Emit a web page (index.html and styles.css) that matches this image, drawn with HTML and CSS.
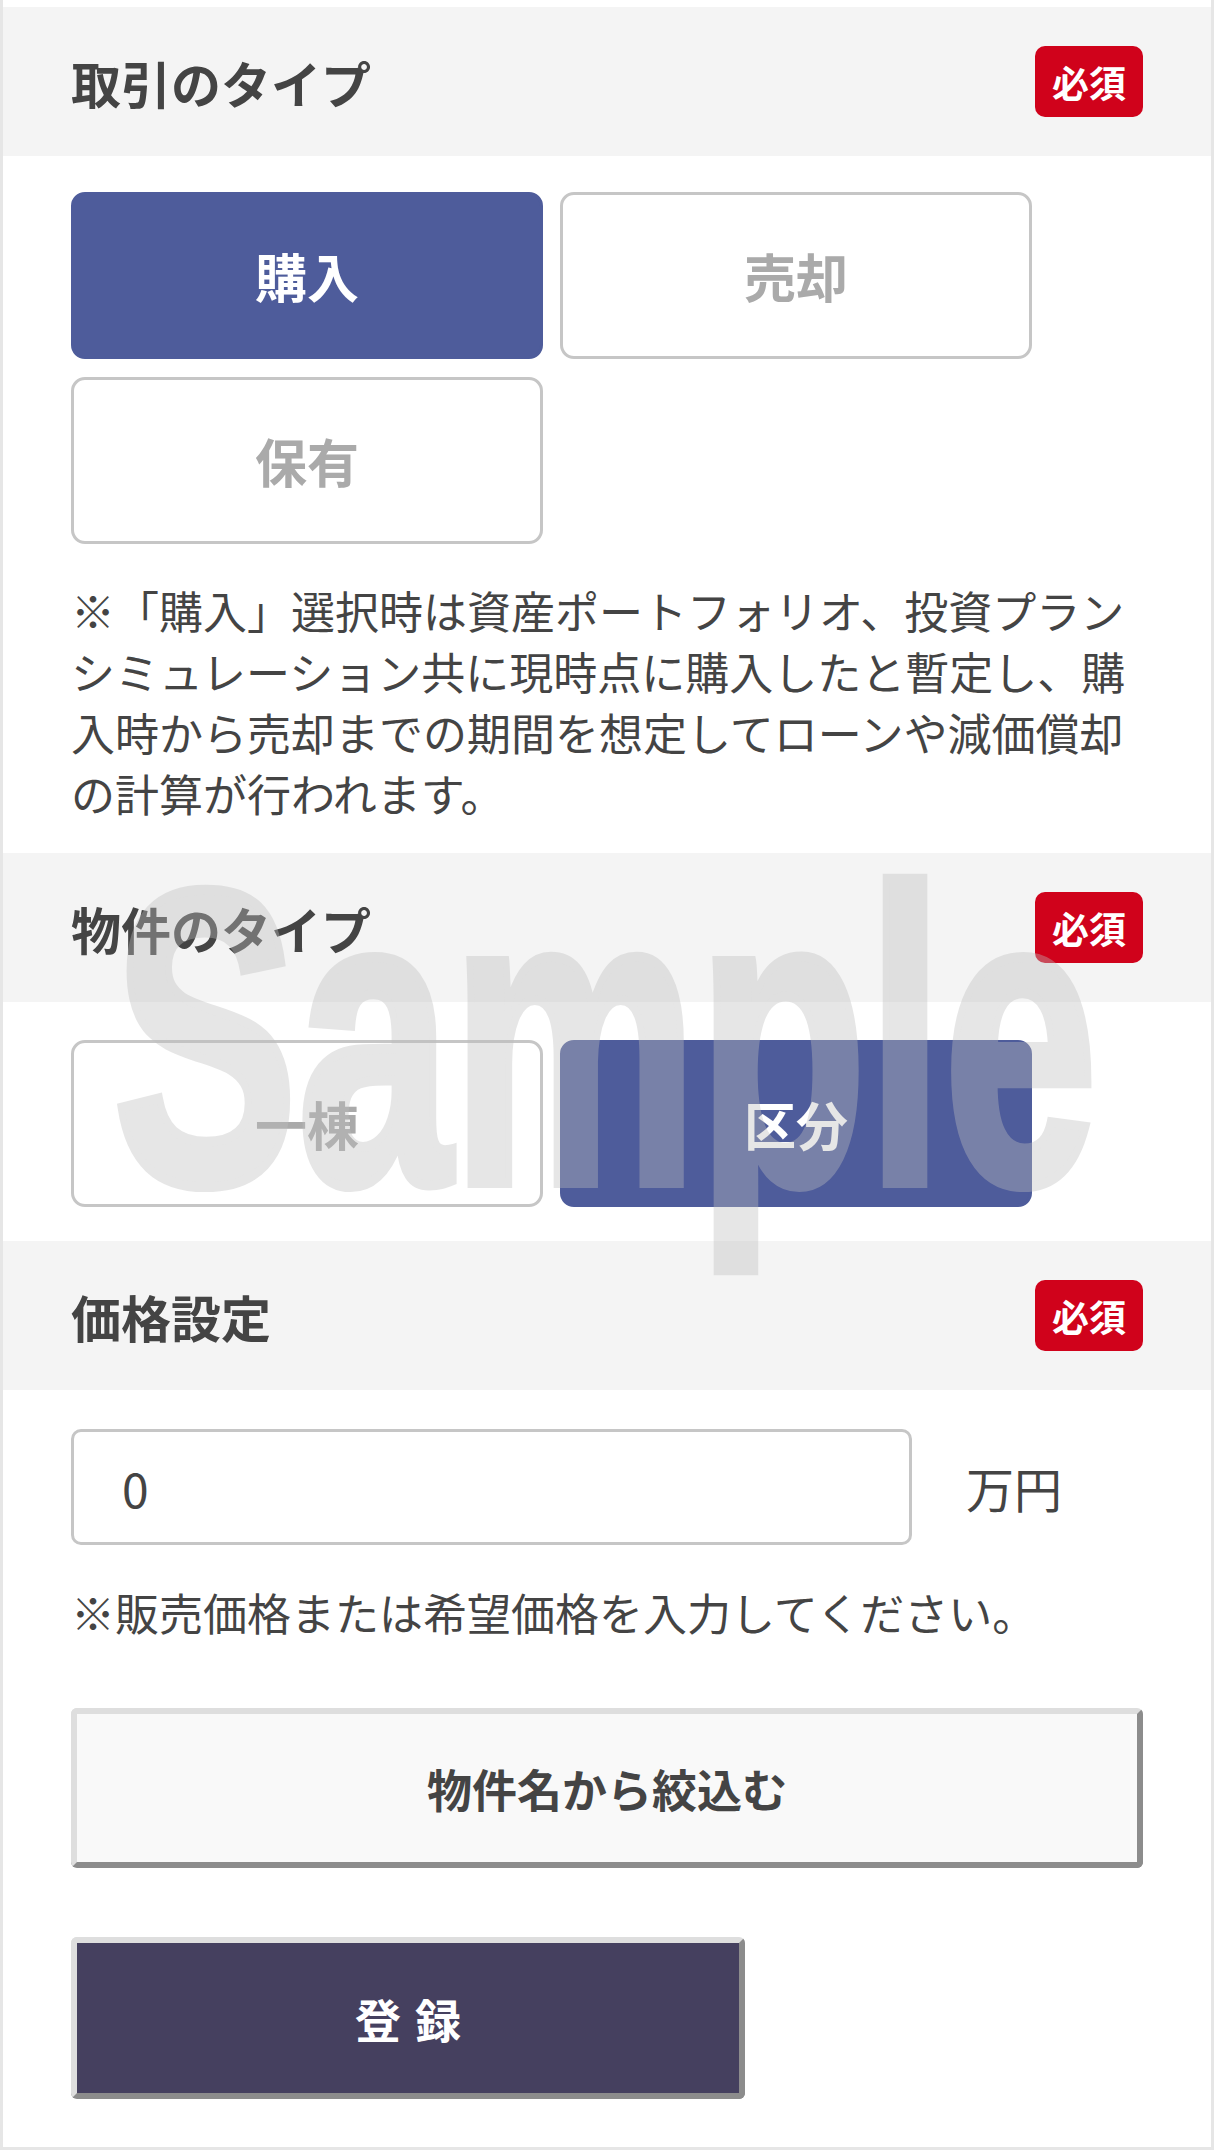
FILE: index.html
```
<html>
<head>
	<meta charset="utf-8">
	<link rel="stylesheet" href="styles.css">
	<title>物件登録</title>
</head>
<body>
	<div id="page">

		<section class="field" id="dealtype">
			<div class="fieldhead">
				<h2>取引のタイプ</h2>
				<span class="required">必須</span>
			</div>
			<div class="fieldbody">
				<div class="choices">
					<button class="choice selected">購入</button>
					<button class="choice">売却</button>
					<button class="choice">保有</button>
				</div>
				<p class="note">※「購入」選択時は資産ポートフォリオ、投資プランシミュレーション共に現時点に購入したと暫定し、購入時から売却までの期間を想定してローンや減価償却の計算が行われます。</p>
			</div>
		</section>

		<section class="field" id="buildingtype">
			<div class="fieldhead">
				<h2>物件のタイプ</h2>
				<span class="required">必須</span>
			</div>
			<div class="fieldbody">
				<div class="choices">
					<button class="choice">一棟</button>
					<button class="choice selected">区分</button>
				</div>
			</div>
		</section>

		<section class="field" id="price">
			<div class="fieldhead">
				<h2>価格設定</h2>
				<span class="required">必須</span>
			</div>
			<div class="fieldbody">
				<div class="pricerow">
					<input id="priceinput" type="text" value="0"/>
					<span class="unit">万円</span>
				</div>
				<p class="note">※販売価格または希望価格を入力してください。</p>
				<button id="searchbtn">物件名から絞込む</button>
				<button id="registerbtn">登録</button>
			</div>
		</section>

		<div id="watermark">Sample</div>
	</div>
</body>
</html>
```

FILE: styles.css
```
html,body{
	margin: 0;
	background-color: #fff;
}
body,button,input{
	font-family: "Noto Sans CJK JP", "Noto Sans", sans-serif;
	color: #444;
}
#page{
	position: relative;
	overflow: hidden;
	padding-top: 7px;
	border-left: 3px solid #e6e6e6;
	border-right: 3px solid #e6e6e6;
	border-bottom: 3px solid #e6e6e6;
}
.fieldhead{
	height: 149px;
	background-color: #f4f4f4;
	padding: 0 68px;
	display: flex;
	align-items: center;
	justify-content: space-between;
}
.fieldhead h2{
	margin: 0;
	font-size: 50px;
	font-weight: bold;
	line-height: 1;
}
.required{
	width: 108px;
	height: 71px;
	border-radius: 10px;
	background-color: #d0021b;
	color: #fff;
	font-size: 37px;
	font-weight: bold;
	display: flex;
	align-items: center;
	justify-content: center;
}
.fieldbody{
	padding: 36px 68px 29px 68px;
}
#buildingtype .fieldbody{
	padding-top: 38px;
	padding-bottom: 34px;
}
#price .fieldbody{
	padding-top: 39px;
	padding-bottom: 48px;
}
.choices{
	display: grid;
	grid-template-columns: 472px 472px;
	column-gap: 17px;
	row-gap: 18px;
}
.choice{
	height: 167px;
	box-sizing: border-box;
	border: 3px solid #c6c6c6;
	border-radius: 14px;
	background-color: #fff;
	color: #aaa;
	font-size: 52px;
	font-weight: bold;
	padding: 0;
	cursor: pointer;
}
.choice.selected{
	background-color: #4e5c9b;
	border-color: #4e5c9b;
	color: #fff;
}
.choice:focus{
	outline: 0;
}
.note{
	margin: 36px 0 0 0;
	font-size: 44px;
	line-height: 61px;
}
#price .note{
	margin-top: 37px;
}
.pricerow{
	display: flex;
	align-items: center;
}
#priceinput{
	width: 841px;
	height: 116px;
	box-sizing: border-box;
	border: 3px solid #c6c6c6;
	border-radius: 10px;
	padding: 0 0 0 48px;
	font-size: 48px;
	background-color: #fff;
}
#priceinput:focus{
	outline: 0;
}
.unit{
	margin-left: 54px;
	font-size: 48px;
}
#searchbtn, #registerbtn{
	display: block;
	box-sizing: border-box;
	border-style: solid;
	border-width: 6px;
	border-color: #dedede #8c8c8c #8c8c8c #dedede;
	border-radius: 6px;
	font-weight: bold;
	padding: 0;
	cursor: pointer;
}
#searchbtn{
	margin-top: 65px;
	width: 1072px;
	height: 160px;
	background-color: #f9f9f9;
	font-size: 45px;
	color: #444;
}
#registerbtn{
	margin-top: 69px;
	width: 674px;
	height: 162px;
	background-color: #45405f;
	color: #fff;
	font-size: 46px;
	letter-spacing: 14px;
	text-indent: 14px;
}
/* watermark sits over the form, drawn as one translucent layer */
#watermark{
	position: absolute;
	left: 110px;
	top: 828px;
	font-family: "Liberation Sans", Arial, sans-serif;
	font-weight: bold;
	font-size: 420px;
	line-height: 1;
	color: #bebebe;
	-webkit-text-stroke: 10px #bebebe;
	opacity: 0.38;
	transform: scaleX(0.659);
	transform-origin: left top;
	white-space: nowrap;
	pointer-events: none;
}
```
